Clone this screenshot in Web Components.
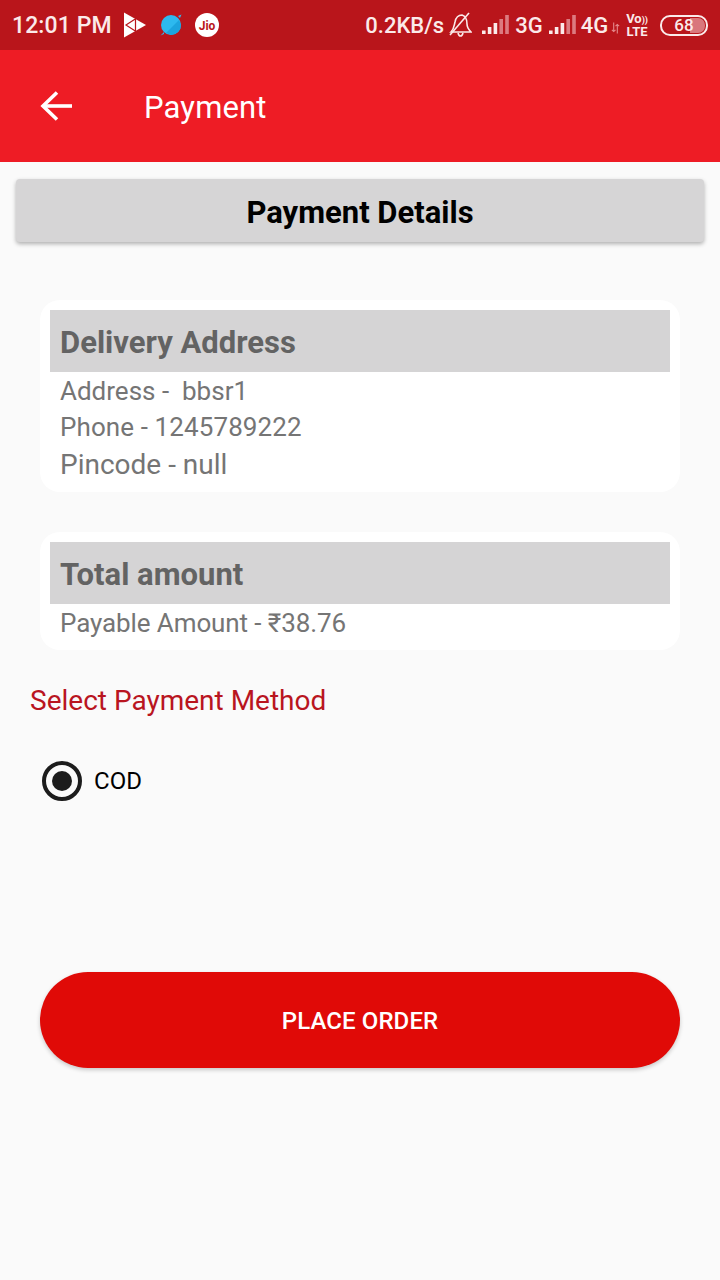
<!DOCTYPE html>
<html>
<head>
<meta charset="utf-8">
<title>Payment</title>
<style>
    html, body { margin: 0; padding: 0; background: #fafafa; }
    body { width: 720px; height: 1280px; overflow: hidden; font-family: Roboto, "Noto Sans", sans-serif; }
</style>
</head>
<body>
<status-bar></status-bar>
<app-bar>Payment</app-bar>
<title-card>Payment Details</title-card>
<info-card class="first" heading="Delivery Address">
    <div>Address -&nbsp; bbsr1</div>
    <div class="phone">Phone - 1245789222</div>
    <div class="pin">Pincode - null</div>
</info-card>
<info-card class="second" heading="Total amount">
    <div class="payable">Payable Amount - ₹38.76</div>
</info-card>
<payment-method heading="Select Payment Method" option="COD"></payment-method>
<place-order>PLACE ORDER</place-order>

<script>
class StatusBar extends HTMLElement {
    constructor() {
        super();
        this.attachShadow({ mode: 'open' });
    }

    connectedCallback() {
        const signal = `
            <svg width="28" height="22" viewBox="0 0 28 22">
                <rect x="0" y="16.5" width="3.6" height="3.5" fill="#fbeaea"/>
                <rect x="5.8" y="13" width="3.6" height="7" fill="#fbeaea"/>
                <rect x="11.6" y="9" width="3.6" height="11" fill="#fbeaea"/>
                <rect x="17.4" y="5" width="3.6" height="15" fill="#dc7b80"/>
                <rect x="23.2" y="1" width="3.6" height="19" fill="#dc7b80"/>
            </svg>`;
        this.shadowRoot.innerHTML = `
            <style>
                :host {
                    display: flex;
                    justify-content: space-between;
                    align-items: center;
                    height: 50px;
                    padding: 0 12px;
                    box-sizing: border-box;
                    background: #b9151b;
                    color: #fbeaea;
                    font: 500 23px Roboto, sans-serif;
                }
                .side { display: flex; align-items: center; }
                .clock { margin-right: 12px; letter-spacing: 0.1px; }
                .net { font-size: 22px; }
                .jio { font: 700 12px Roboto, sans-serif; fill: #b9151b; }
                .volte {
                    display: flex;
                    flex-direction: column;
                    align-items: center;
                    font: 700 13px/11px Roboto, sans-serif;
                    margin-right: 12px;
                }
                .volte small { font-size: 9px; }
                .battery {
                    width: 42px;
                    height: 15px;
                    border: 2px solid #fbeaea;
                    border-radius: 10px;
                    display: flex;
                    justify-content: center;
                    align-items: center;
                    font: 500 17px Roboto, sans-serif;
                    background: linear-gradient(90deg, transparent 64%, #d9777c 64%);
                    background-clip: content-box;
                    padding: 1px;
                }
            </style>
            <div class="side">
                <span class="clock">12:01 PM</span>
                <svg width="22" height="26" viewBox="0 0 22 25" style="margin-right:14px">
                    <path d="M0 0 L22 12.5 L0 25 Z" fill="#fff"/>
                    <path d="M12 6 L2 12.5 L12 19 M11.5 6 V19" fill="none" stroke="#b9151b" stroke-width="1.2"/>
                </svg>
                <svg width="22" height="22" viewBox="0 0 22 22" style="margin-right:13px">
                    <circle cx="11" cy="11" r="10" fill="#2db9ef"/>
                    <path d="M18 2 L21.5 0.5 L20 4 Z M4 18 L0.5 21.5 L4 20 Z" fill="#2db9ef"/>
                    <path d="M6 19 L19 6 L21 11 A10 10 0 0 1 11 21 Z" fill="#1ca4de"/>
                </svg>
                <svg width="24" height="24" viewBox="0 0 24 24">
                    <circle cx="12" cy="12" r="12" fill="#fff"/>
                    <text class="jio" x="12" y="16.5" text-anchor="middle">Jio</text>
                </svg>
            </div>
            <div class="side">
                <span class="net" style="margin-right:5px">0.2KB/s</span>
                <svg width="23" height="26" viewBox="0 0 23 26" fill="none" stroke="#fbeaea" stroke-width="1.6" style="margin-right:10px">
                    <path d="M2 20 C5 17 5 14 6 10 C7 5 10 3 13 3 C17 4 18 8 18 12 C18 15 20 18 22 20 Z"/>
                    <path d="M9 21 C10 25 13 25 14 21"/>
                    <path d="M1 23 L20 1"/>
                </svg>
                ${signal}
                <span class="net" style="margin:0 6px 0 5px">3G</span>
                ${signal}
                <span class="net" style="margin-left:4px">4G</span>
                <svg width="9" height="12" viewBox="0 0 10 12" style="margin:6px 6px 0 3px">
                    <path d="M3 0 V10 M7 2 V12 M1 8 L3 10 L5 8 M5 4 L7 2 L9 4" stroke="#e58a8d" stroke-width="1.2" fill="none"/>
                </svg>
                <span class="volte"><span>Vo<small>))</small></span><span>LTE</span></span>
                <span class="battery">68</span>
            </div>
        `;
    }
}

class AppBar extends HTMLElement {
    constructor() {
        super();
        this.attachShadow({ mode: 'open' });
    }

    connectedCallback() {
        this.shadowRoot.innerHTML = `
            <style>
                :host {
                    display: flex;
                    align-items: center;
                    height: 112px;
                    padding: 0 0 0 40px;
                    box-sizing: border-box;
                    background: #ee1c25;
                    color: #fff;
                    font: 400 31px Roboto, sans-serif;
                    letter-spacing: 0.15px;
                }
                svg { margin-right: 71px; }
                span { padding-top: 2px; }
            </style>
            <svg width="33" height="30" viewBox="0 0 33 30" fill="none" stroke="#fff" stroke-width="3.6">
                <path d="M32 15 H3"/>
                <path d="M17 1.5 L3 15 L17 28.5"/>
            </svg>
            <span><slot></slot></span>
        `;
    }
}

class TitleCard extends HTMLElement {
    constructor() {
        super();
        this.attachShadow({ mode: 'open' });
    }

    connectedCallback() {
        this.shadowRoot.innerHTML = `
            <style>
                :host {
                    display: flex;
                    justify-content: center;
                    align-items: center;
                    height: 63px;
                    box-sizing: border-box;
                    padding-top: 4px;
                    margin: 17px 16px 0;
                    background: #d6d5d6;
                    border-radius: 4px;
                    box-shadow: 0 2px 4px rgba(0, 0, 0, 0.3);
                    color: #000;
                    font: 700 31px Roboto, sans-serif;
                }
            </style>
            <slot></slot>
        `;
    }
}

class InfoCard extends HTMLElement {
    constructor() {
        super();
        this.attachShadow({ mode: 'open' });
    }

    connectedCallback() {
        this.shadowRoot.innerHTML = `
            <style>
                :host {
                    display: block;
                    margin: 40px 40px 0;
                    padding: 10px 10px 9px;
                    background: #fff;
                    border-radius: 20px;
                }
                :host(.first) { margin-top: 58px; }
                h2 {
                    margin: 0;
                    height: 62px;
                    box-sizing: border-box;
                    padding: 2px 10px 0;
                    display: flex;
                    align-items: center;
                    background: #d5d4d5;
                    color: #636363;
                    font: 700 31px Roboto, sans-serif;
                }
                .rows {
                    padding: 1px 10px 0;
                    color: #757575;
                    font: 400 26px/36px Roboto, sans-serif;
                }
                ::slotted(.phone) { letter-spacing: 0.1px; }
                ::slotted(.payable) { letter-spacing: -0.1px; }
                ::slotted(.pin) { font-size: 28px; line-height: 36px; padding-top: 2px; }
            </style>
            <h2>${this.getAttribute('heading')}</h2>
            <div class="rows"><slot></slot></div>
        `;
    }
}

class PaymentMethod extends HTMLElement {
    constructor() {
        super();
        this.attachShadow({ mode: 'open' });
    }

    connectedCallback() {
        this.shadowRoot.innerHTML = `
            <style>
                :host { display: block; padding: 34px 30px 0; }
                .heading {
                    color: #b9151f;
                    font: 400 28px/34px Roboto, sans-serif;
                }
                .option {
                    display: flex;
                    align-items: center;
                    gap: 12px;
                    margin: 43px 0 0 12px;
                    color: #000;
                    font: 400 24px Roboto, sans-serif;
                    letter-spacing: 0.1px;
                }
                .radio {
                    width: 40px;
                    height: 40px;
                    box-sizing: border-box;
                    border: 4.5px solid #1c1c1c;
                    border-radius: 50%;
                    display: flex;
                    align-items: center;
                    justify-content: center;
                }
                .radio span {
                    width: 20px;
                    height: 20px;
                    border-radius: 50%;
                    background: #1c1c1c;
                }
            </style>
            <div class="heading">${this.getAttribute('heading')}</div>
            <div class="option">
                <div class="radio"><span></span></div>
                <span>${this.getAttribute('option')}</span>
            </div>
        `;
    }
}

class PlaceOrder extends HTMLElement {
    constructor() {
        super();
        this.attachShadow({ mode: 'open' });
    }

    connectedCallback() {
        this.shadowRoot.innerHTML = `
            <style>
                :host {
                    display: flex;
                    justify-content: center;
                    align-items: center;
                    height: 96px;
                    box-sizing: border-box;
                    padding-top: 2px;
                    margin: 171px 40px 0;
                    background: #e00a07;
                    border-radius: 48px;
                    box-shadow: 0 2px 4px rgba(0, 0, 0, 0.2);
                    color: #fff;
                    font: 500 24px Roboto, sans-serif;
                    letter-spacing: 0.1px;
                }
            </style>
            <slot></slot>
        `;
    }
}

customElements.define('status-bar', StatusBar);
customElements.define('app-bar', AppBar);
customElements.define('title-card', TitleCard);
customElements.define('info-card', InfoCard);
customElements.define('payment-method', PaymentMethod);
customElements.define('place-order', PlaceOrder);
</script>
</body>
</html>
